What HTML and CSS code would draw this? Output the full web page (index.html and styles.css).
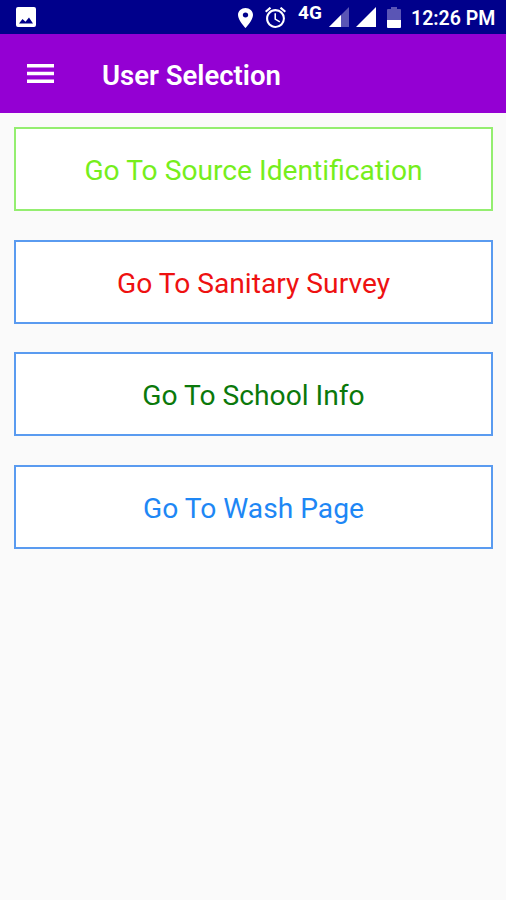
FILE: index.html
```html
<!DOCTYPE html>
<html lang="en">
<head>
    <meta charset="UTF-8">
    <meta name="viewport" content="width=device-width, initial-scale=1.0">
    <title>User Selection</title>
    <link rel="stylesheet" href="styles.css">
</head>
<body>
    <div class="status-bar">
        <svg class="icon-image" width="20" height="20" viewBox="0 0 20 20">
            <path fill="#fff" fill-rule="evenodd" d="M2 0h16a2 2 0 0 1 2 2v16a2 2 0 0 1-2 2H2a2 2 0 0 1-2-2V2a2 2 0 0 1 2-2zM3 16.500h14L13 10.500l-3.500 4.200L6.500 12z"/>
        </svg>

        <div class="status-icons">
            <svg class="icon-pin" width="15" height="20" viewBox="5 2 14 20" preserveAspectRatio="none">
                <path fill="#fff" d="M12 2C8.130 2 5 5.130 5 9c0 5.250 7 13 7 13s7-7.750 7-13c0-3.870-3.130-7-7-7zm0 9.500a2.500 2.500 0 0 1 0-5 2.500 2.500 0 0 1 0 5z"/>
            </svg>
            <svg class="icon-alarm" width="21" height="21" viewBox="2 2 20 20">
                <path fill="#fff" d="M22 5.720l-4.600-3.860-1.290 1.530 4.600 3.860L22 5.720zM7.880 3.390L6.600 1.860 2 5.710l1.290 1.530 4.590-3.850zM12.500 8H11v6l4.750 2.850.75-1.230-4-2.370V8zM12 4c-4.970 0-9 4.030-9 9s4.020 9 9 9a9 9 0 0 0 0-18zm0 16c-3.870 0-7-3.130-7-7s3.130-7 7-7 7 3.130 7 7-3.130 7-7 7z"/>
            </svg>
            <span class="network">4G</span>
            <svg class="icon-signal" width="20" height="20" viewBox="0 0 20 20">
                <path fill="#5a55b5" d="M20 0v20H0z"/>
                <path fill="#fff" d="M12 8v12H0z"/>
            </svg>
            <svg class="icon-signal-full" width="20" height="20" viewBox="0 0 20 20">
                <path fill="#fff" d="M20 0v20H0z"/>
            </svg>
            <svg class="icon-battery" width="14" height="21" viewBox="0 0 14 21">
                <path fill="#5a55b5" d="M4 0h6v2h3a1 1 0 0 1 1 1v10H0V3a1 1 0 0 1 1-1h3z"/>
                <path fill="#fff" d="M0 13h14v7a1 1 0 0 1-1 1H1a1 1 0 0 1-1-1z"/>
            </svg>
        </div>
        <span class="clock">12:26 PM</span>
    </div>

    <header class="toolbar">
        <svg class="icon-menu" width="27" height="20" viewBox="0 0 27 20">
            <path fill="#fff" d="M0 0h27v3.500H0zM0 7.800h27v3.500H0zM0 15.600h27v3.500H0z"/>
        </svg>
        <h1 class="toolbar-title">User Selection</h1>
    </header>

    <main class="menu">
        <button class="menu-button source"><span>Go To Source Identification</span></button>
        <button class="menu-button sanitary"><span>Go To Sanitary Survey</span></button>
        <button class="menu-button school"><span>Go To School Info</span></button>
        <button class="menu-button wash"><span>Go To Wash Page</span></button>
    </main>
</body>
</html>
```
FILE: styles.css
```css
:root {
    --status-color: #00008b;
    --toolbar-color: #9400d3;
    --background-color: #fafafa;
    --border-color: #5a9bf0;
}

* {
    margin: 0;
    padding: 0;
    box-sizing: border-box;
    font-family: Roboto, sans-serif;
}

body {
    min-height: 100vh;
    background: var(--background-color);
}

.status-bar {
    display: flex;
    align-items: flex-start;
    height: 34px;
    padding: 7px 11px 0 16px;
    background: var(--status-color);
    color: white;
}

.status-icons {
    display: flex;
    align-items: flex-start;
    margin-left: auto;
}

.icon-pin {
    margin-top: 1px;
}

.icon-alarm {
    margin-left: 12px;
}

.network {
    width: 25px;
    margin: -4px 0 0 12px;
    font-size: 19px;
    font-weight: 700;
    line-height: 20px;
}

.icon-signal {
    margin-left: 6px;
}

.icon-signal-full {
    margin-left: 7px;
}

.icon-battery {
    margin-left: 11px;
}

.clock {
    width: 84px;
    margin-left: 10px;
    font-size: 19.5px;
    font-weight: 600;
    line-height: 23px;
    white-space: nowrap;
}

.toolbar {
    display: flex;
    align-items: center;
    height: 79px;
    padding: 0 26px 0 27px;
    background: var(--toolbar-color);
    color: white;
}

.toolbar-title {
    margin: 3px 0 0 48px;
    font-size: 27.5px;
    font-weight: 600;
}

.menu {
    display: grid;
    gap: 28.500px;
    padding: 14px 13px 0 14px;
}

.menu-button {
    height: 84px;
    padding-top: 3px;
    border: 2px solid var(--border-color);
    background: white;
    font-size: 28.2px;
    cursor: pointer;
}

.source {
    border-color: #94ee70;
    color: #76ee1c;
}

.sanitary {
    color: #ee1111;
}

.school {
    color: #0b790b;
}

.wash {
    color: #1e87f5;
}
```
